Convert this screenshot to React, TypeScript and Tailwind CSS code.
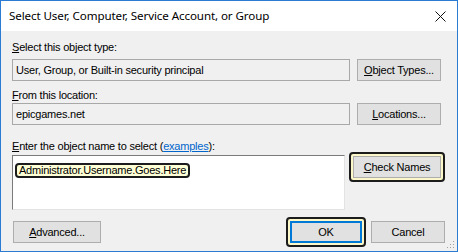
import React from 'react';

const U: React.FC<{ children: React.ReactNode }> = ({ children }) => (
  <span className="underline underline-offset-[1px]">{children}</span>
);

const Btn: React.FC<{ className?: string; children: React.ReactNode }> = ({ className = '', children }) => (
  <div
    className={`flex h-[22px] items-center justify-center border border-[#adadad] bg-[#e1e1e1] text-[11px] leading-none text-black ${className}`}
  >
    {children}
  </div>
);

const Highlight: React.FC<{ className?: string; children: React.ReactNode }> = ({ className = '', children }) => (
  <div className={`rounded-[4px] border-2 border-[#1c1c1c] bg-[#fbf7c8] p-[2px] ${className}`}>{children}</div>
);

const App: React.FC = () => {
  return (
    <div
      className="relative flex h-[252px] w-[458px] flex-col border border-[#2b7ad3] bg-white tracking-[-0.22px]"
      style={{ fontFamily: '"Liberation Sans", Arial, sans-serif' }}
    >
      {/* title bar */}
      <div className="flex h-[30px] shrink-0 items-center justify-between bg-white pl-[8px] pr-[10px]">
        <span
          className="text-[11.6px] tracking-[-0.1px] text-black"
          style={{ fontFamily: '"Noto Sans", "Open Sans", sans-serif' }}
        >
          Select User, Computer, Service Account, or Group
        </span>
        <svg width="11" height="11" viewBox="0 0 11 11" className="mr-[1px]">
          <path d="M0.5 0.5 L10.5 10.5 M10.5 0.5 L0.5 10.5" stroke="#111" strokeWidth="1" fill="none" />
        </svg>
      </div>

      {/* body */}
      <div className="flex flex-1 flex-col bg-[#f0f0f0] pl-[11px] pr-[12px] pt-[10px]">
        <div className="h-[13px] text-[11px] leading-[13px] text-black">
          <U>S</U>elect this object type:
        </div>
        <div className="mt-[5px] flex h-[22px] items-start gap-[7px]">
          <div className="flex h-[22px] w-[338px] items-center border border-[#a8a8a8] bg-[#f0f0f0] px-[3px] text-[11px] text-black">
            User, Group, or Built-in security principal
          </div>
          <Btn className="w-[84px]">
            <span>
              <U>O</U>bject Types...
            </span>
          </Btn>
        </div>

        <div className="mt-[8px] h-[13px] text-[11px] leading-[13px] text-black">
          <U>F</U>rom this location:
        </div>
        <div className="mt-[1px] flex h-[22px] items-start gap-[7px]">
          <div className="flex h-[22px] w-[338px] items-center border border-[#a8a8a8] bg-[#f0f0f0] px-[3px] text-[11px] text-black">
            epicgames.net
          </div>
          <Btn className="w-[84px]">
            <span>
              <U>L</U>ocations...
            </span>
          </Btn>
        </div>

        <div className="mt-[15px] h-[13px] text-[11px] leading-[13px] text-black">
          <U>E</U>nter the object name to select (
          <span className="text-[#0066cc] underline underline-offset-[1px]">examples</span>):
        </div>
        <div className="mt-[2px] flex h-[55px] items-start">
          <div className="h-[55px] w-[337px] border-b border-l border-r border-t border-b-[#e3e3e3] border-l-[#7a7a7a] border-r-[#e3e3e3] border-t-[#7a7a7a] bg-white pl-[2px] pt-[1px]">
            <span className="inline-block rounded-[4px] border-2 border-[#1c1c1c] bg-[#ffffd6] px-[2px] text-[11px] leading-[11px] text-black">
              Administrator.Username.Goes.Here
            </span>
          </div>
          <Highlight className="-mt-[3px] ml-[4px]">
            <Btn className="w-[88px]">
              <span>
                <U>C</U>heck Names
              </span>
            </Btn>
          </Highlight>
        </div>

        <div className="mt-[7px] flex h-[30px] items-center justify-between">
          <Btn className="ml-[1px] w-[88px]">
            <span>
              <U>A</U>dvanced...
            </span>
          </Btn>
          <div className="flex items-center gap-[5px]">
            <Highlight>
              <div className="flex h-[22px] w-[72px] items-center justify-center border-2 border-[#0078d7] bg-[#e1e1e1] text-[11px] text-black">
                OK
              </div>
            </Highlight>
            <Btn className="w-[74px]">Cancel</Btn>
          </div>
        </div>
      </div>

      {/* resize grip */}
      <svg width="9" height="9" viewBox="0 0 9 9" className="absolute bottom-[2px] right-[2px]">
        {[
          [7, 1],
          [7, 4],
          [4, 4],
          [7, 7],
          [4, 7],
          [1, 7],
        ].map(([x, y]) => (
          <rect key={`${x}-${y}`} x={x} y={y} width="1" height="1" fill="#a0a0a0" />
        ))}
      </svg>
    </div>
  );
};

export default App;
